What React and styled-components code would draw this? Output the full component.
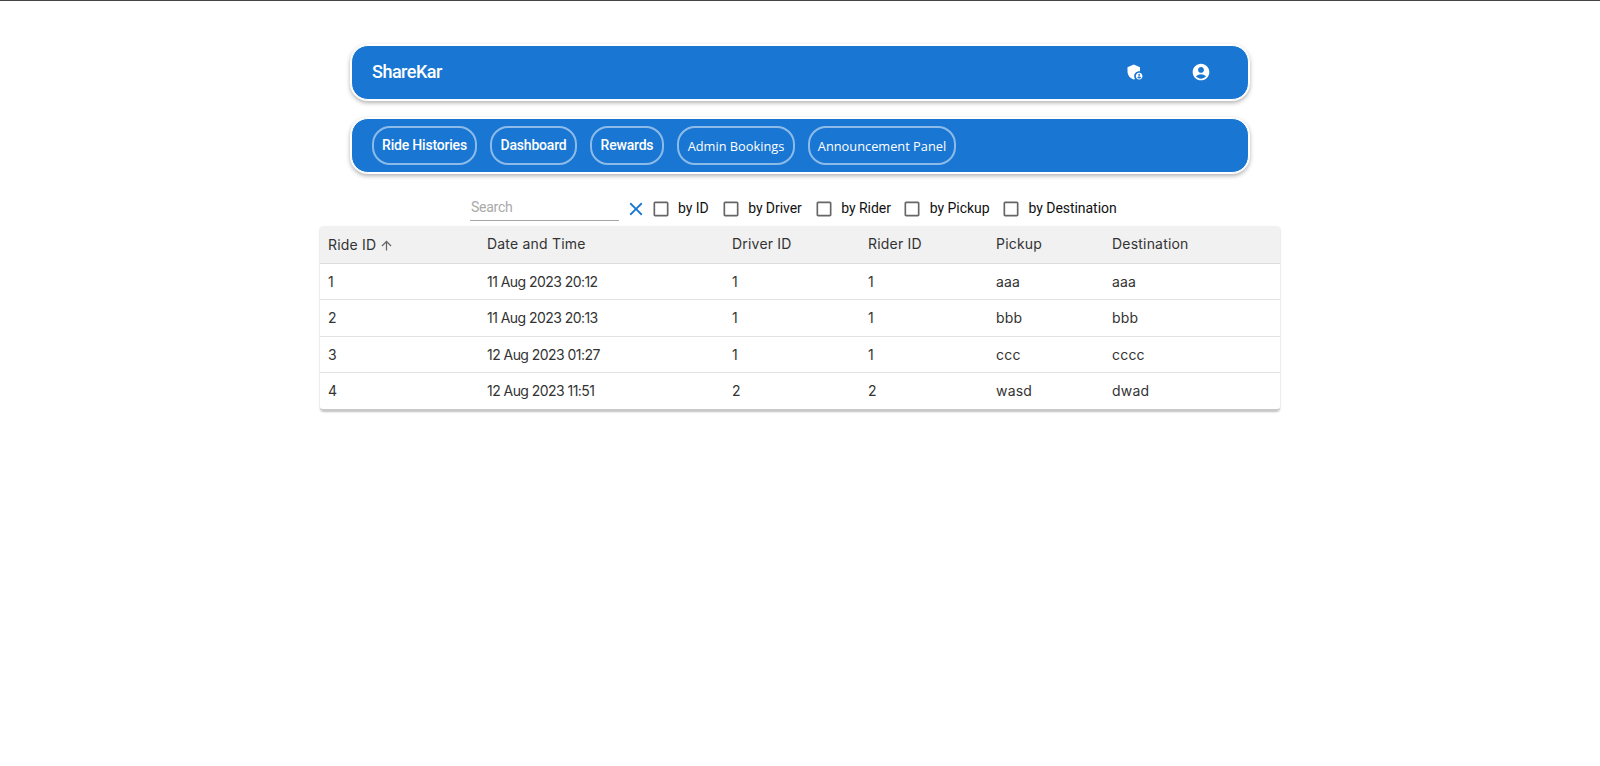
import React from "react";
import styled, { createGlobalStyle } from "styled-components";
import { MdAdminPanelSettings, MdAccountCircle, MdArrowUpward, MdClose, MdCheckBoxOutlineBlank } from "react-icons/md";

const Global = createGlobalStyle`
  html, body { margin: 0; padding: 0; background: #fff; }
  body { font-family: Roboto, "Liberation Sans", sans-serif; }
  * { box-sizing: border-box; }
`;

const Page = styled.div`
  height: 766px;
  border-top: 1px solid #444;
  padding-top: 44px;
  overflow: hidden;
`;

const Bar = styled.div`
  width: 898px;
  height: 55px;
  margin: 0 auto ${(p) => p.$mb}px;
  padding: 0 ${(p) => p.$pr || 0}px 0 20px;
  background: #1976d2;
  border: 1px solid #fff;
  border-radius: 17px;
  box-shadow: 0 0 0 1px #fff, 0 2px 4px 1px rgba(0, 0, 0, 0.3);
  display: flex;
  align-items: center;
  color: #fff;
`;

const Brand = styled.div`
  flex: 1;
  padding-bottom: 2px;
  font: 500 18px Roboto, sans-serif;
  letter-spacing: -0.5px;
`;

const IconSlot = styled.div`
  width: 24px;
  height: 24px;
  margin-bottom: 1px;
  display: flex;
  align-items: center;
  justify-content: center;
  margin-left: ${(p) => p.$ml || 0}px;
  svg { display: block; }
`;

const Pills = styled.div`
  display: flex;
  gap: 13px;
`;

const Pill = styled.div`
  height: 39px;
  width: ${(p) => p.$w}px;
  padding-bottom: ${(p) => (p.$alt ? 0 : 2)}px;
  border: 2px solid rgba(255, 255, 255, 0.5);
  border-radius: 18px;
  display: flex;
  align-items: center;
  justify-content: center;
  white-space: nowrap;
  font: ${(p) => (p.$alt ? '400 12.8px "Open Sans", sans-serif' : "500 14px Roboto, sans-serif")};
  letter-spacing: ${(p) => (p.$alt ? "0" : "-0.2px")};
`;

const Toolbar = styled.div`
  display: flex;
  align-items: center;
  height: 32px;
  margin-top: 20px;
  padding-left: 470px;
  color: #111;
`;

const SearchBox = styled.div`
  width: 149px;
  height: 24px;
  padding: 2px 0 0 1px;
  border-bottom: 1px solid #a6a6a6;
  font: 400 14px/16px Roboto, sans-serif;
  letter-spacing: -0.25px;
  color: #a9a9a9;
`;

const ClearIcon = styled.div`
  display: flex;
  margin-left: 6px;
  color: #1976d2;
  svg { display: block; }
`;

const Check = styled.label`
  display: flex;
  align-items: center;
  margin-left: ${(p) => p.$ml}px;
  font: 400 14px/18px Roboto, sans-serif;
  letter-spacing: -0.05px;
  color: #111;
  white-space: nowrap;
  span { display: block; margin-top: -2px; }
  svg { color: #666; margin-right: 7.5px; display: block; }
`;

const Card = styled.div`
  width: 960px;
  margin: 1px auto 0;
  border-radius: 4px;
  overflow: hidden;
  box-shadow: 0 1px 2px rgba(0, 0, 0, 0.25);
  border-bottom: 2px solid #c8c8c8;
`;

const Table = styled.table`
  width: 100%;
  border-collapse: collapse;
  table-layout: fixed;
  font: 400 14px Inter, sans-serif;
  letter-spacing: 0.2px;
  color: #333;
`;

const Head = styled.th`
  height: 37.5px;
  width: ${(p) => p.$w}px;
  padding: 0 8px ${(p) => (p.$sorted ? 0 : 3)}px;
  text-align: left;
  font-weight: 400;
  background: #f1f1f1;
  border-bottom: 1px solid #dcdcdc;
  svg { vertical-align: -3px; margin-left: 3px; color: #666; }
`;

const Cell = styled.td`
  height: ${(p) => (p.$tall ? 37 : 36)}px;
  padding: 0 8px 1px;
  border-bottom: 1px solid #e2e2e2;
  letter-spacing: ${(p) => (p.$tight ? "-0.55px" : "inherit")};
  tr:last-child & { border-bottom: none; }
`;

const rows = [
  [1, "11 Aug 2023 20:12", 1, 1, "aaa", "aaa"],
  [2, "11 Aug 2023 20:13", 1, 1, "bbb", "bbb"],
  [3, "12 Aug 2023 01:27", 1, 1, "ccc", "cccc"],
  [4, "12 Aug 2023 11:51", 2, 2, "wasd", "dwad"],
];

const heads = [
  ["Ride ID", 159],
  ["Date and Time", 245],
  ["Driver ID", 136],
  ["Rider ID", 128],
  ["Pickup", 116],
  ["Destination", 176],
];

const filters = [
  ["by ID", 3.5],
  ["by Driver", 12],
  ["by Rider", 12],
  ["by Pickup", 11.5],
  ["by Destination", 11.5],
];

export default function App() {
  return (
    <Page>
      <Global />
      <Bar $mb={18} $pr={35}>
        <Brand>ShareKar</Brand>
        <IconSlot><MdAdminPanelSettings size={20} /></IconSlot>
        <IconSlot $ml={42}><MdAccountCircle size={20} /></IconSlot>
      </Bar>
      <Bar $mb={0}>
        <Pills>
          <Pill $w={105}>Ride Histories</Pill>
          <Pill $w={87}>Dashboard</Pill>
          <Pill $w={74}>Rewards</Pill>
          <Pill $w={118} $alt>Admin Bookings</Pill>
          <Pill $w={148} $alt>Announcement Panel</Pill>
        </Pills>
      </Bar>
      <Toolbar>
        <SearchBox>Search</SearchBox>
        <ClearIcon><MdClose size={22} /></ClearIcon>
        {filters.map(([label, ml]) => (
          <Check key={label} $ml={ml}>
            <MdCheckBoxOutlineBlank size={20} />
            <span>{label}</span>
          </Check>
        ))}
      </Toolbar>
      <Card>
        <Table>
          <thead>
            <tr>
              {heads.map(([h, w], i) => (
                <Head key={h} $w={w} $sorted={i === 0}>
                  {h}
                  {i === 0 && <MdArrowUpward size={15} />}
                </Head>
              ))}
            </tr>
          </thead>
          <tbody>
            {rows.map((r, n) => (
              <tr key={r[0]}>
                {r.map((c, i) => <Cell key={i} $tight={i === 1} $tall={n === 1}>{c}</Cell>)}
              </tr>
            ))}
          </tbody>
        </Table>
      </Card>
    </Page>
  );
}
